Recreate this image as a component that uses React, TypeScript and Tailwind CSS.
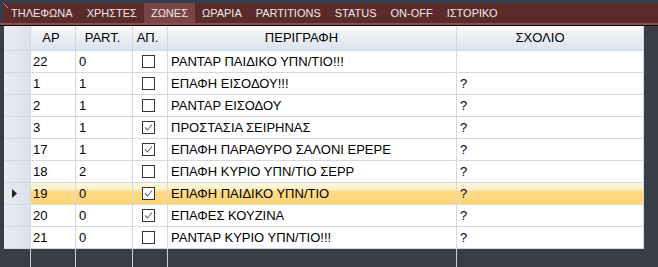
import React from 'react';

type Row = { ap: string; part: string; checked: boolean; desc: string; note: string };

const rows: Row[] = [
  { ap: '22', part: '0', checked: false, desc: 'ΡΑΝΤΑΡ ΠΑΙΔΙΚΟ ΥΠΝ/ΤΙΟ!!!', note: '' },
  { ap: '1', part: '1', checked: false, desc: 'ΕΠΑΦΗ ΕΙΣΟΔΟΥ!!!', note: '?' },
  { ap: '2', part: '1', checked: false, desc: 'ΡΑΝΤΑΡ ΕΙΣΟΔΟΥ', note: '?' },
  { ap: '3', part: '1', checked: true, desc: 'ΠΡΟΣΤΑΣΙΑ ΣΕΙΡΗΝΑΣ', note: '?' },
  { ap: '17', part: '1', checked: true, desc: 'ΕΠΑΦΗ ΠΑΡΑΘΥΡΟ ΣΑΛΟΝΙ ΕΡΕΡΕ', note: '?' },
  { ap: '18', part: '2', checked: false, desc: 'ΕΠΑΦΗ ΚΥΡΙΟ ΥΠΝ/ΤΙΟ ΣΕΡΡ', note: '?' },
  { ap: '19', part: '0', checked: true, desc: 'ΕΠΑΦΗ ΠΑΙΔΙΚΟ ΥΠΝ/ΤΙΟ', note: '?' },
  { ap: '20', part: '0', checked: true, desc: 'ΕΠΑΦΕΣ ΚΟΥΖΙΝΑ', note: '?' },
  { ap: '21', part: '0', checked: false, desc: 'ΡΑΝΤΑΡ ΚΥΡΙΟ ΥΠΝ/ΤΙΟ!!!', note: '?' },
];

const tabs = ['ΤΗΛΕΦΩΝΑ', 'ΧΡΗΣΤΕΣ', 'ΖΩΝΕΣ', 'ΩΡΑΡΙΑ', 'PARTITIONS', 'STATUS', 'ON-OFF', 'ΙΣΤΟΡΙΚΟ'];

const CheckBox: React.FC<{ checked: boolean }> = ({ checked }) => (
  <div className="w-[13px] h-[13px] border border-[#333] bg-white flex items-center justify-center">
    {checked && (
      <svg width="9" height="9" viewBox="0 0 9 9">
        <path d="M1 4.5 L3.5 7 L8 1.5" fill="none" stroke="#6b6b6b" strokeWidth="1.1" />
      </svg>
    )}
  </div>
);

const App: React.FC = () => {
  const line = 'border-r border-b border-[#d3d9e3]';

  return (
    <div className="relative w-[658px] h-[267px] overflow-hidden bg-[#393e46] pt-[3px] flex flex-col font-['Liberation_Sans',Arial,sans-serif]">
      {/* window grip */}
      <svg className="absolute left-[3px] top-[3px]" width="6" height="6" viewBox="0 0 6 6">
        <path d="M0.5 0.5 L5 5" stroke="#9aa0a8" strokeWidth="1" />
      </svg>

      {/* Tabs */}
      <div className="ml-[3px] flex h-[20px] bg-[#5b2a2b]">
        <div className="w-[1px]" />
        {tabs.map((t) => (
          <div
            key={t}
            className={`px-[7px] flex items-center text-[11px] text-[#f2e8e8] ${t === 'ΖΩΝΕΣ' ? 'bg-[#7a4547]' : ''}`}
          >
            {t}
          </div>
        ))}
      </div>
      <div className="h-[2px] bg-[#8a4f50]" />
      <div className="h-[1px] bg-black" />

      {/* Grid */}
      <div className="ml-[4px] w-[640px] flex-1 flex flex-col text-[13px] text-black">
        {/* Header */}
        <div className="flex h-[25px] bg-[linear-gradient(to_bottom,#f8f9fc,#dbe2ec)]">
          <div className={`w-[27px] ${line} bg-[linear-gradient(to_right,#e9ecf2,#dce1ea)]`} />
          <div className={`w-[45px] ${line} flex items-center justify-center pr-[4px]`}>ΑΡ</div>
          <div className={`w-[57px] ${line} flex items-center justify-center pr-[3px]`}>PART.</div>
          <div className={`w-[35px] ${line} flex items-center justify-center pr-[5px]`}>ΑΠ.</div>
          <div className={`w-[289px] ${line} flex items-center justify-center pr-[21px]`}>ΠΕΡΙΓΡΑΦΗ</div>
          <div className={`w-[187px] ${line} flex items-center justify-center pr-[20px]`}>ΣΧΟΛΙΟ</div>
        </div>

        {rows.map((r) => {
          const sel = r.ap === '19';
          const bg = sel
            ? 'bg-[linear-gradient(to_bottom,#fff8e0_0%,#fdefc2_32%,#ffdb84_36%,#ffd57a_100%)]'
            : 'bg-white';
          return (
            <div key={r.ap} className={`flex h-[22px] ${bg}`}>
              <div className={`w-[27px] ${line} bg-[linear-gradient(to_right,#e9ecf2,#dce1ea)] flex items-center pl-[8px]`}>
                {sel && (
                  <svg width="5" height="9" viewBox="0 0 5 9">
                    <path d="M0 0 L5 4.5 L0 9 Z" fill="#222" />
                  </svg>
                )}
              </div>
              <div className={`w-[45px] ${line} flex items-center pl-[2px]`}>{r.ap}</div>
              <div className={`w-[57px] ${line} flex items-center pl-[3px]`}>{r.part}</div>
              <div className={`w-[35px] ${line} flex items-center pl-[9px]`}>
                <CheckBox checked={r.checked} />
              </div>
              <div className={`w-[289px] ${line} flex items-center pl-[3px] whitespace-nowrap overflow-hidden`}>{r.desc}</div>
              <div className={`w-[187px] ${line} flex items-center pl-[3px]`}>{r.note}</div>
            </div>
          );
        })}

        {/* Empty area */}
        <div className="flex flex-1">
          <div className="w-[27px] border-r border-[#c9cfd9]" />
          <div className="w-[45px] border-r border-[#c9cfd9]" />
          <div className="w-[57px] border-r border-[#c9cfd9]" />
          <div className="w-[35px] border-r border-[#c9cfd9]" />
          <div className="w-[289px] border-r border-[#c9cfd9]" />
          <div className="w-[187px]" />
        </div>
      </div>
    </div>
  );
};

export default App;
